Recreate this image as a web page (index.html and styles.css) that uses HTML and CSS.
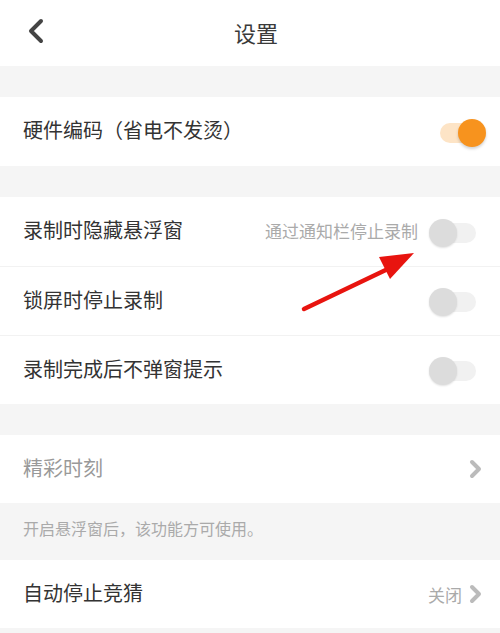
FILE: index.html
```html
<!DOCTYPE html>
<html lang="zh-CN">
<head>
<meta charset="utf-8">
<title>设置</title>
<link rel="stylesheet" href="styles.css">
</head>
<body>
<div class="page">
  <header class="topbar">
    <svg class="back" width="20" height="26" viewBox="0 0 20 26"><path d="M15 3 L5 13 L15 23" fill="none" stroke="#444" stroke-width="4" stroke-linecap="round" stroke-linejoin="round"/></svg>
    <h1 class="title">设置</h1>
  </header>

  <div class="gap"></div>
  <section class="group">
    <div class="row">
      <span class="label">硬件编码（省电不发烫）</span>
      <span class="switch on"><span class="track"></span><span class="knob"></span></span>
    </div>
  </section>

  <div class="gap"></div>
  <section class="group">
    <div class="row">
      <span class="label">录制时隐藏悬浮窗</span>
      <span class="right"><span class="hint">通过通知栏停止录制</span><span class="switch"><span class="track"></span><span class="knob"></span></span></span>
    </div>
    <div class="row sep">
      <span class="label">锁屏时停止录制</span>
      <span class="switch"><span class="track"></span><span class="knob"></span></span>
    </div>
    <div class="row sep">
      <span class="label">录制完成后不弹窗提示</span>
      <span class="switch"><span class="track"></span><span class="knob"></span></span>
    </div>
  </section>

  <div class="gap"></div>
  <section class="group">
    <div class="row short">
      <span class="label disabled">精彩时刻</span>
      <svg class="chev" width="14" height="20" viewBox="0 0 14 20"><path d="M3 3 L10 10 L3 17" fill="none" stroke="#bbb" stroke-width="4" stroke-linecap="round" stroke-linejoin="round"/></svg>
    </div>
  </section>
  <p class="note">开启悬浮窗后，该功能方可使用。</p>
  <section class="group">
    <div class="row short">
      <span class="label">自动停止竞猜</span>
      <span class="right"><span class="value">关闭</span><svg class="chev" width="14" height="20" viewBox="0 0 14 20"><path d="M3 3 L10 10 L3 17" fill="none" stroke="#bbb" stroke-width="4" stroke-linecap="round" stroke-linejoin="round"/></svg></span>
    </div>
  </section>

  <svg class="annot" width="500" height="633" viewBox="0 0 500 633">
    <line x1="304" y1="309" x2="392" y2="267" stroke="#e8140f" stroke-width="4.5" stroke-linecap="round"/>
    <polygon points="414,253 379,257 390,279" fill="#e8140f"/>
  </svg>
</div>
</body>
</html>
```

FILE: styles.css
```css
* { box-sizing: border-box; }
html, body { margin: 0; padding: 0; }
body {
  background: #f5f5f5;
  font-family: "Noto Sans CJK SC", "Noto Sans", sans-serif;
  color: #333;
  width: 500px;
  height: 633px;
  overflow: hidden;
}
.page { position: relative; width: 500px; height: 633px; }

.topbar {
  height: 66px;
  background: #fff;
  display: flex;
  align-items: center;
  justify-content: center;
  position: relative;
}
.back { position: absolute; left: 26px; top: 18px; }
.title {
  margin: 0;
  font-size: 22px;
  font-weight: 400;
  color: #3a3a3a;
  padding-left: 12px;
  line-height: 1;
  margin-top: -2px;
}

.gap { height: 31px; }
.group { background: #fff; }

.row {
  height: 69px;
  padding: 0 14px 0 23px;
  display: flex;
  align-items: center;
  justify-content: space-between;
}
.row.sep { border-top: 1px solid #f2f2f2; height: 69px; }
.row.short { height: 68px; padding-right: 17px; }

.label { font-size: 20px; color: #333; line-height: 1; margin-top: -3px; }
.label.disabled { color: #999; margin-top: -3px; }

.right { display: flex; align-items: center; }
.hint { font-size: 17px; color: #aaa; margin-right: 11px; margin-top: -3px; }
.value { font-size: 17px; color: #aaa; margin-right: 7px; }

.switch {
  position: relative;
  width: 57px;
  height: 28px;
  flex: none;
  margin-top: 2px;
}
.switch .track {
  position: absolute;
  left: 11px;
  top: 4px;
  width: 36px;
  height: 20px;
  border-radius: 10px;
  background: #f1f1f1;
}
.switch .knob {
  position: absolute;
  left: 0;
  top: 0;
  width: 28px;
  height: 28px;
  border-radius: 50%;
  background: #dcdcdc;
  box-shadow: 0 1px 2px rgba(0,0,0,0.12);
}
.switch.on .track { background: #fde4c6; }
.switch.on .knob { left: auto; right: 0; background: #f7931e; box-shadow: 0 2px 3px rgba(0,0,0,0.18); }

.chev { display: block; }

.note {
  margin: 0;
  height: 57px;
  padding: 13px 23px 0;
  font-size: 16px;
  color: #aaa;
}

.annot { position: absolute; left: 0; top: 0; pointer-events: none; }
```
